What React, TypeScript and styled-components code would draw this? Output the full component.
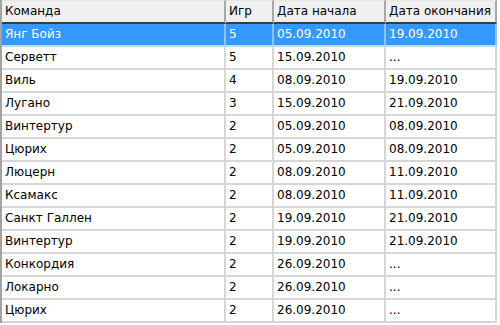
import React from "react";
import styled, { createGlobalStyle } from "styled-components";

const Global = createGlobalStyle`
  html, body { margin: 0; padding: 0; background: #ffffff; }
  body { font-family: "DejaVu Sans", "Liberation Sans", sans-serif; }
`;

const Grid = styled.div`
  width: 499px;
  display: grid;
  grid-template-columns: 224px 48px 112px 111px;
  border-left: 2px solid #a3a3a3;
  box-sizing: border-box;
  font-size: 12px;
  color: #000;
`;

const HeadCell = styled.div`
  height: 21px;
  line-height: 21px;
  padding-left: 3px;
  background: #f0f0f0;
  border-top: 1px solid #e6e6e6;
  border-right: 2px solid #a8a8a8;
  border-bottom: 2px solid #3c3c3c;
  white-space: nowrap;
  overflow: hidden;
`;

const Cell = styled.div<{ $sel?: boolean }>`
  height: 21px;
  line-height: 21px;
  padding-left: 3px;
  background: ${(p) => (p.$sel ? "#3399ff" : "#ffffff")};
  color: ${(p) => (p.$sel ? "#ffffff" : "#000000")};
  border-right: 2px solid ${(p) => (p.$sel ? "#8cc3fb" : "#d6d6d6")};
  border-bottom: 2px solid #d6d6d6;
  white-space: nowrap;
  overflow: hidden;
`;

const rows: [string, string, string, string][] = [
  ["Янг Бойз", "5", "05.09.2010", "19.09.2010"],
  ["Серветт", "5", "15.09.2010", "..."],
  ["Виль", "4", "08.09.2010", "19.09.2010"],
  ["Лугано", "3", "15.09.2010", "21.09.2010"],
  ["Винтертур", "2", "05.09.2010", "08.09.2010"],
  ["Цюрих", "2", "05.09.2010", "08.09.2010"],
  ["Люцерн", "2", "08.09.2010", "11.09.2010"],
  ["Ксамакс", "2", "08.09.2010", "11.09.2010"],
  ["Санкт Галлен", "2", "19.09.2010", "21.09.2010"],
  ["Винтертур", "2", "19.09.2010", "21.09.2010"],
  ["Конкордия", "2", "26.09.2010", "..."],
  ["Локарно", "2", "26.09.2010", "..."],
  ["Цюрих", "2", "26.09.2010", "..."],
];

const headers = ["Команда", "Игр", "Дата начала", "Дата окончания"];

export default function App() {
  return (
    <>
      <Global />
      <Grid>
        {headers.map((h) => (
          <HeadCell key={h}>{h}</HeadCell>
        ))}
        {rows.map((r, i) =>
          r.map((c, j) => (
            <Cell key={`${i}-${j}`} $sel={i === 0}>
              {c}
            </Cell>
          ))
        )}
      </Grid>
    </>
  );
}
